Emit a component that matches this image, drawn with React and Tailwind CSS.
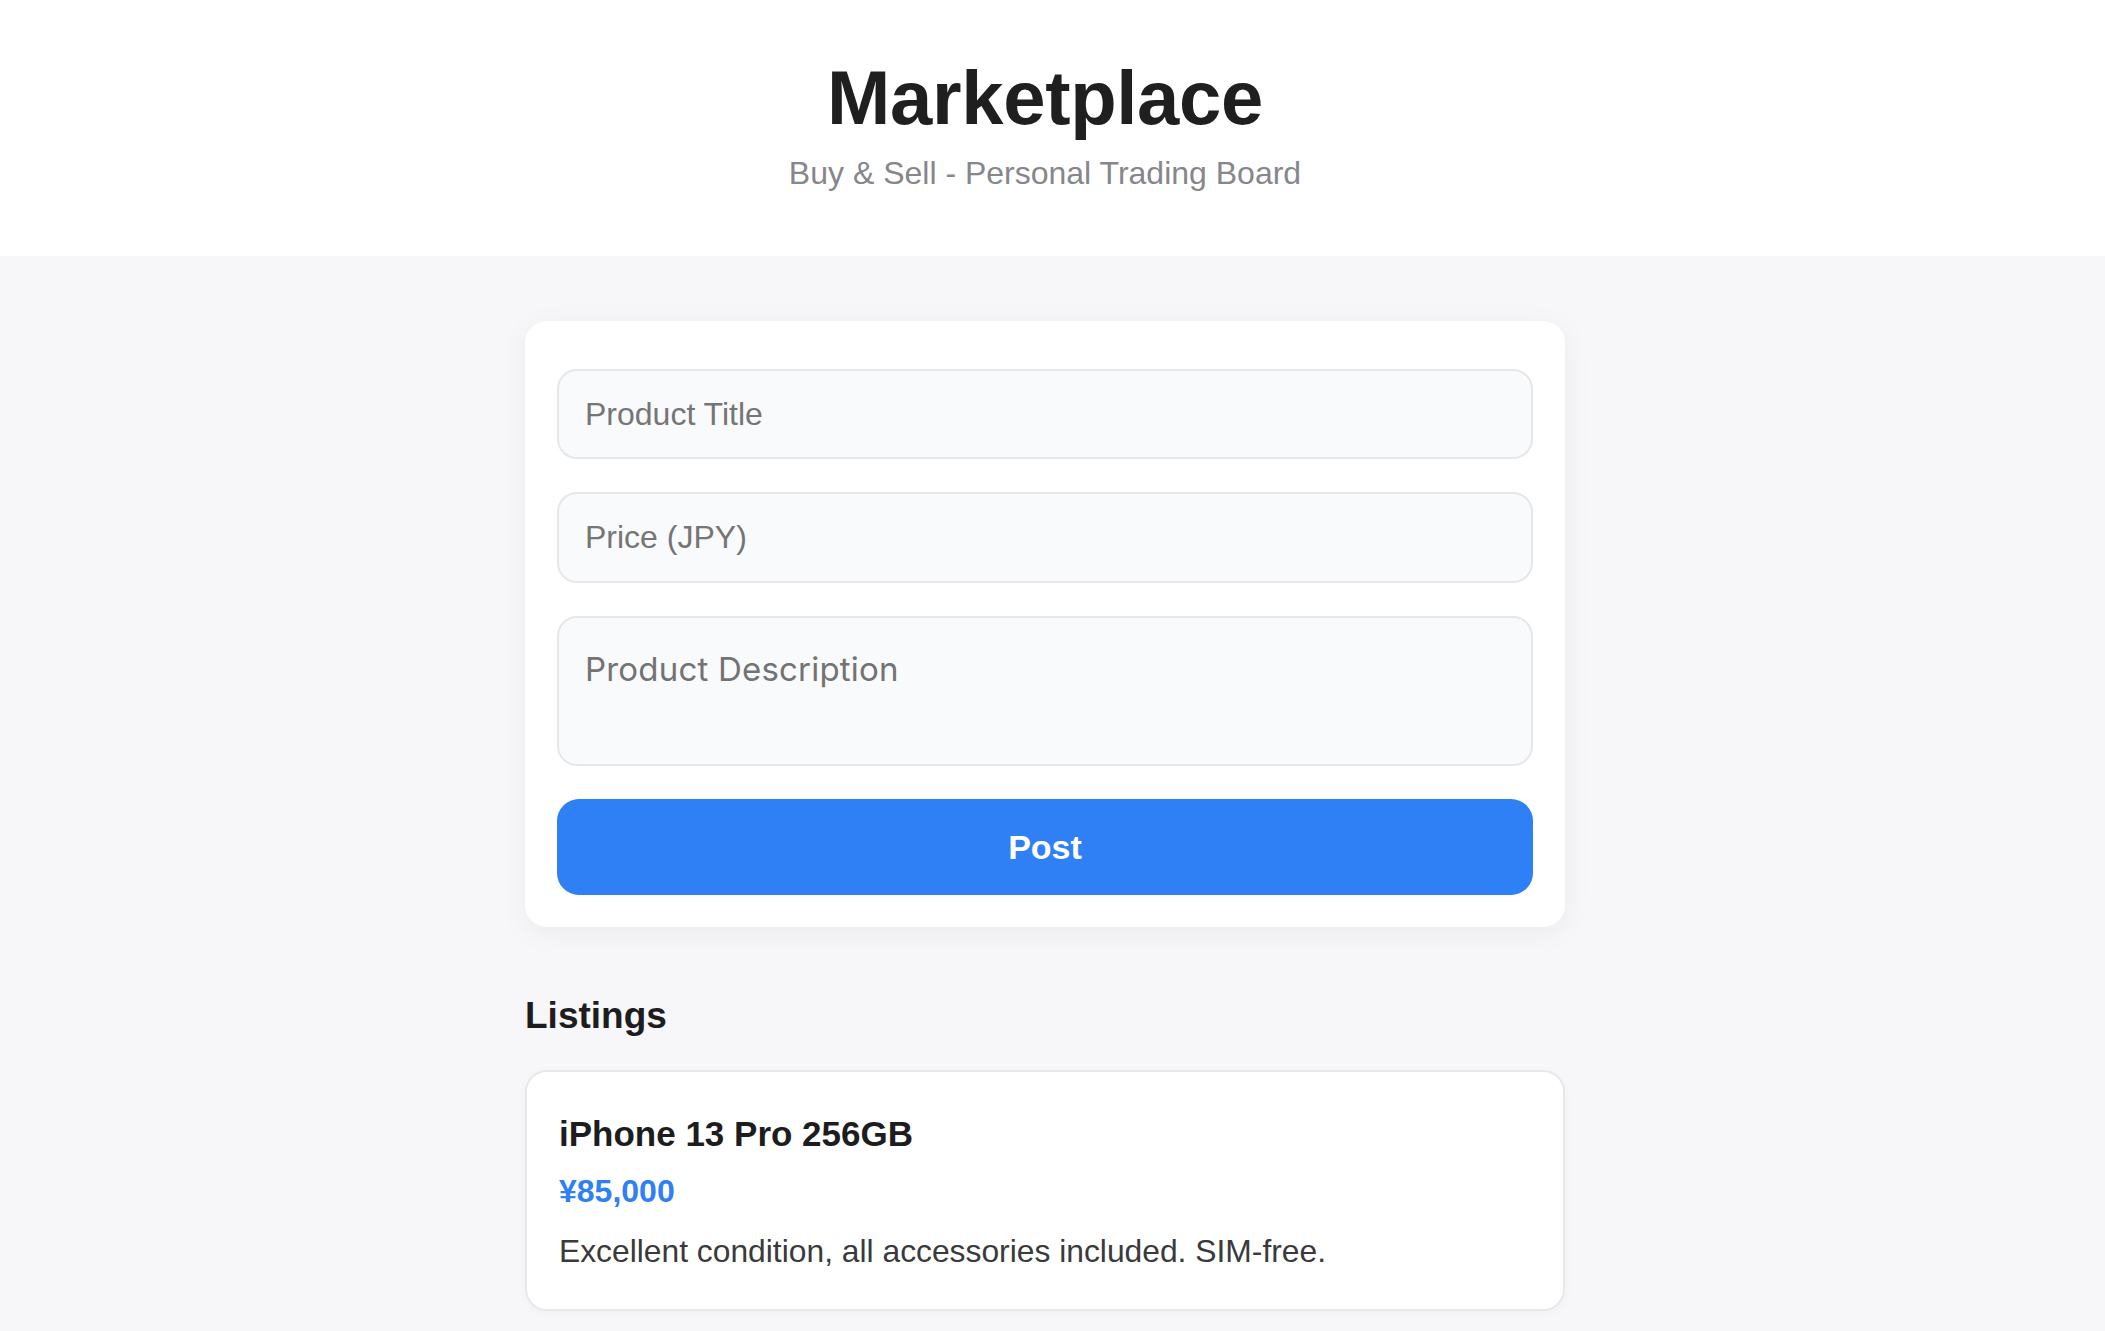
import { useState } from 'react'

const LISTINGS = [
  {
    id: 1,
    title: 'iPhone 13 Pro 256GB',
    price: 85000,
    description: 'Excellent condition, all accessories included. SIM-free.',
  },
]

function formatYen(n) {
  return '¥' + n.toLocaleString('en-US')
}

function ListingCard({ item }) {
  return (
    <div className="rounded-[22px] border-2 border-[#e8e8ec] bg-white px-8 pt-[41px] pb-[34px] shadow-[0_2px_10px_rgba(0,0,0,0.03)]">
      <div className="text-[35px] leading-[42px] font-bold text-[#1d1d1f]">{item.title}</div>
      <div className="mt-[16px] text-[32px] leading-[40px] font-bold text-[#2f7ff5]">{formatYen(item.price)}</div>
      <div className="mt-[16px] text-[31.8px] leading-[48px] text-[#3a3a3c]">{item.description}</div>
    </div>
  )
}

export default function App() {
  const [title, setTitle] = useState('')
  const [price, setPrice] = useState('')
  const [desc, setDesc] = useState('')

  return (
    <div
      className="h-[1331px] overflow-hidden bg-[#f7f7f9]"
      style={{ fontFamily: '"Liberation Sans", Arial, sans-serif' }}
    >
      {/* Header */}
      <header className="bg-white pr-[15px] pt-[53px] pb-[64px] text-center">
        <h1 className="text-[76px] leading-[90px] font-bold tracking-[-0.3px] text-[#1f1f1f]">Marketplace</h1>
        <p className="mt-[11px] text-[32px] leading-[38px] text-[#86868b]">Buy &amp; Sell - Personal Trading Board</p>
      </header>

      <main className="pr-[15px] pt-[65px]">
        <div className="mx-auto w-[1040px]">
          {/* Post form */}
          <form
            className="flex flex-col gap-[33px] rounded-[22px] bg-white px-8 pt-12 pb-8 shadow-[0_6px_30px_rgba(0,0,0,0.05)]"
            onSubmit={(e) => e.preventDefault()}
          >
            <input
              value={title}
              onChange={(e) => setTitle(e.target.value)}
              placeholder="Product Title"
              className="h-[90px] rounded-[20px] border-2 border-[#e6e7eb] bg-[#f9fafb] px-[26px] text-[32px] text-[#1d1d1f] outline-none placeholder:text-[#757575]"
            />
            <input
              value={price}
              onChange={(e) => setPrice(e.target.value)}
              placeholder="Price (JPY)"
              className="h-[91px] rounded-[20px] border-2 border-[#e6e7eb] bg-[#f9fafb] px-[26px] text-[32px] text-[#1d1d1f] outline-none placeholder:text-[#757575]"
            />
            <textarea
              value={desc}
              onChange={(e) => setDesc(e.target.value)}
              placeholder="Product Description"
              className="h-[150px] resize-none rounded-[20px] border-2 border-[#e6e7eb] bg-[#f9fafb] px-[26px] pt-[27px] text-[33px] tracking-[0.2px] text-[#1d1d1f] outline-none placeholder:text-[#737373]"
              style={{ fontFamily: 'Inter, "Noto Sans", sans-serif' }}
            />
            <button
              type="submit"
              className="h-[96px] rounded-[22px] bg-[#2f7ff5] text-[34px] font-bold text-white"
            >
              Post
            </button>
          </form>

          {/* Listings */}
          <h2 className="mt-[67px] text-[37px] leading-[44px] font-bold text-[#1d1d1f]">Listings</h2>
          <div className="mt-[32px] flex flex-col gap-8">
            {LISTINGS.map((item) => (
              <ListingCard key={item.id} item={item} />
            ))}
          </div>
        </div>
      </main>
    </div>
  )
}
